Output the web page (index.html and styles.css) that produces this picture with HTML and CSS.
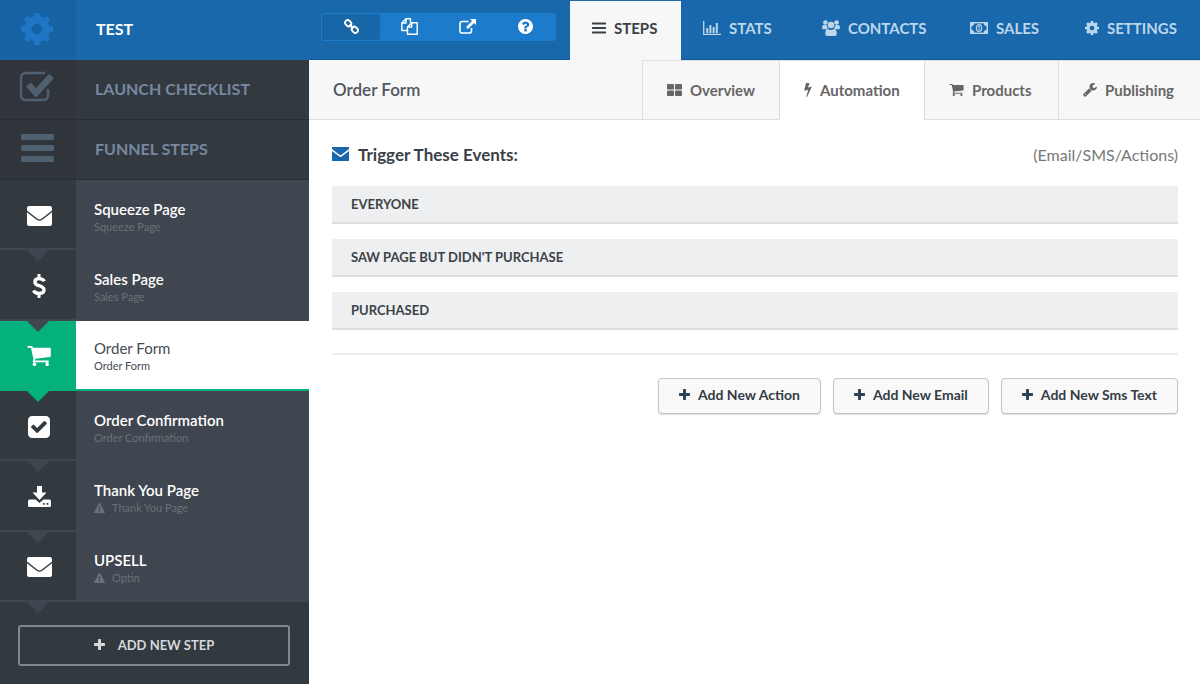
FILE: index.html
```html
<!DOCTYPE html>
<html lang="en">
<head>
<meta charset="utf-8">
<title>Test funnel - Order Form</title>
<meta name="viewport" content="width=device-width, initial-scale=1">
<link rel="stylesheet" href="styles.css">
</head>
<body>
<svg class="sprite" aria-hidden="true">
  <symbol id="gear-lg" viewBox="0 0 32 32"><g fill="none" stroke="currentColor"><circle cx="16" cy="16" r="9" stroke-width="7.4"/></g><g fill="currentColor"><path d="M12.600 6 13.200.6Q13.300 0 14 0h4q.7 0 .8.6L19.400 6zM12.600 26l.6 5.400q.1.6.8.6h4q.7 0 .8-.6l.6-5.400z"/><path transform="rotate(45 16 16)" d="M12.600 6 13.200.6Q13.300 0 14 0h4q.7 0 .8.6L19.400 6zM12.600 26l.6 5.400q.1.6.8.6h4q.7 0 .8-.6l.6-5.400z"/><path transform="rotate(90 16 16)" d="M12.600 6 13.200.6Q13.300 0 14 0h4q.7 0 .8.6L19.400 6zM12.600 26l.6 5.400q.1.6.8.6h4q.7 0 .8-.6l.6-5.400z"/><path transform="rotate(135 16 16)" d="M12.600 6 13.200.6Q13.300 0 14 0h4q.7 0 .8.6L19.400 6zM12.600 26l.6 5.400q.1.6.8.6h4q.7 0 .8-.6l.6-5.400z"/></g></symbol>
  <symbol id="checklist" viewBox="0 0 36 32"><path d="M26 2H7Q2 2 2 7v17q0 5 5 5h17q5 0 5-5v-6" fill="none" stroke="currentColor" stroke-width="2.400"/><path d="m9.500 13.500 7.500 8.500L32.500 5" fill="none" stroke="currentColor" stroke-width="6.400"/></symbol>
  <symbol id="bars-lg" viewBox="0 0 33 28"><g fill="currentColor"><rect width="33" height="6" rx="1.500"/><rect y="11" width="33" height="6" rx="1.500"/><rect y="22" width="33" height="6" rx="1.500"/></g></symbol>
  <symbol id="bars" viewBox="0 0 14 12"><path d="M.5 1.500h13M.5 6h13M.5 10.500h13" stroke="currentColor" stroke-width="1.800" stroke-linecap="round"/></symbol>
  <symbol id="envelope" viewBox="0 0 25 20"><path fill="currentColor" d="M2 0h21q2 0 2 2v2.600l-10.500 8.200q-2 1.500-4 0L0 4.600V2Q0 0 2 0zM0 6.200l9.600 7.500q2.900 2.200 5.800 0L25 6.200V18q0 2-2 2H2q-2 0-2-2z"/></symbol>
  <symbol id="envelope-sq" viewBox="0 0 17 14"><path fill="currentColor" d="M0 0h17v2L9.500 7.700q-1 .7-2 0L0 2zM0 4l7 5.200q1.500 1 3 0L17 4v10H0z"/></symbol>
  <symbol id="dollar" viewBox="0 0 14 24"><path d="M12.300 7.200Q11 4.600 7.200 4.600 2.900 4.600 2.900 7.900q0 2.500 4.100 3.700 5 1.400 5 4.500 0 3.400-4.800 3.400-4.200 0-5.700-3" fill="none" stroke="currentColor" stroke-width="3.400"/><path d="M7 0v5M7 19v5" stroke="currentColor" stroke-width="3"/></symbol>
  <symbol id="cart" viewBox="64 256 1664 1408"><path fill="currentColor" d="M704 1536q0 52-38 90t-90 38-90-38-38-90 38-90 90-38 90 38 38 90zm896 0q0 52-38 90t-90 38-90-38-38-90 38-90 90-38 90 38 38 90zm128-1088v512q0 24-16.500 42.500t-40.500 21.500l-1044 122q13 60 13 70 0 16-24 64h920q26 0 45 19t19 45-19 45-45 19h-1024q-26 0-45-19t-19-45q0-11 8-31.500t16-36 21.500-40 15.500-29.500l-177-823h-204q-26 0-45-19t-19-45 19-45 45-19h256q16 0 28.500 6.500t19.500 15.500 13 24.500 8 26 5.500 29.500 4.500 26h1201q26 0 45 19t19 45z"/></symbol>
  <symbol id="check-square" viewBox="128 128 1536 1536"><path fill="currentColor" d="M813 1299l614-614q19-19 19-45t-19-45l-102-102q-19-19-45-19t-45 19l-467 467-211-211q-19-19-45-19t-45 19l-102 102q-19 19-19 45t19 45l358 358q19 19 45 19t45-19zm851-883v960q0 119-84.500 203.500t-203.500 84.500h-960q-119 0-203.500-84.500t-84.500-203.500v-960q0-119 84.500-203.500t203.500-84.500h960q119 0 203.500 84.500t84.500 203.500z"/></symbol>
  <symbol id="download" viewBox="0 0 23 21"><path fill="currentColor" d="M9 0h5v6.500h4.500L11.500 14l-7-7.500H9z"/><path fill="currentColor" fill-rule="evenodd" d="M1.500 13.500h6l4 3.500 4-3.500h6q1.500 0 1.500 1.500v4.500q0 1.500-1.500 1.500h-20Q0 21 0 19.500V15q0-1.500 1.500-1.500zM15 17v1.700h1.700V17zm3.600 0v1.700h1.700V17z"/></symbol>
  <symbol id="plus" viewBox="192 128 1408 1408"><path fill="currentColor" d="M1600 736v192q0 40-28 68t-68 28h-416v416q0 40-28 68t-68 28h-192q-40 0-68-28t-28-68v-416h-416q-40 0-68-28t-28-68v-192q0-40 28-68t68-28h416v-416q0-40 28-68t68-28h192q40 0 68 28t28 68v416h416q40 0 68 28t28 68z"/></symbol>
  <symbol id="warning" viewBox="0 0 12 11"><path fill="currentColor" fill-rule="evenodd" d="M6 0q.5 0 .8.500l5 9.300Q12.300 11 11 11H1Q-.3 11 .2 9.800l5-9.300Q5.500 0 6 0zM5.100 3.800l.3 3.400h1.200l.3-3.400zm.2 4.200v1.400h1.400V8z"/></symbol>
  <symbol id="link" viewBox="0 0 16 16"><g transform="rotate(45 8 8)" fill="none" stroke="currentColor" stroke-width="2"><rect x="-.5" y="5.200" width="7" height="5.600" rx="2.800"/><rect x="9.500" y="5.200" width="7" height="5.600" rx="2.800"/><path d="M5 8h6"/></g></symbol>
  <symbol id="copy" viewBox="0 0 17 17"><g fill="none" stroke="currentColor" stroke-width="1.400" stroke-linejoin="round"><path d="M6.500 12.500H.8V5L5 .8h4.500v4M5 .8V5H.8"/><path d="M10.700 4.800h5.500v11.400H6.500V9zV9H6.500"/></g></symbol>
  <symbol id="external" viewBox="0 0 17 15"><path d="M9.500 2.500H3.200Q1 2.500 1 4.700v7Q1 14 3.200 14h7.100q2.200 0 2.200-2.300V9" fill="none" stroke="currentColor" stroke-width="1.600"/><path fill="currentColor" d="M11 0h6v6l-2-2-6 6-1.900-1.900 6-6z"/></symbol>
  <symbol id="question" viewBox="128 128 1536 1536"><path fill="currentColor" d="M1024 1376v-192q0-14-9-23t-23-9h-192q-14 0-23 9t-9 23v192q0 14 9 23t23 9h192q14 0 23-9t9-23zm256-672q0-88-55.500-163t-138.500-116-170-41q-243 0-371 213-15 24 8 42l132 100q7 6 19 6 16 0 25-12 53-68 86-92 34-24 86-24 48 0 85.500 26t37.500 59q0 38-20 61t-68 45q-63 28-115.500 86.500t-52.500 125.500v36q0 14 9 23t23 9h192q14 0 23-9t9-23q0-19 21.500-49.500t54.500-49.500q32-18 49-28.500t46-35 44.500-48 28-60.500 12.500-81zm384 192q0 209-103 385.500t-279.500 279.500-385.500 103-385.500-103-279.500-279.500-103-385.500 103-385.500 279.500-279.500 385.500-103 385.500 103 279.500 279.500 103 385.500z"/></symbol>
  <symbol id="chart" viewBox="0 0 18 14"><path d="M.7 0v13.300H18" fill="none" stroke="currentColor" stroke-width="1.300"/><path d="M4.200 7v5M7.400 4v8M10.600 6v6M13.800 2v10" stroke="currentColor" stroke-width="2"/></symbol>
  <symbol id="users" viewBox="0 0 18 16"><g fill="currentColor"><circle cx="3.400" cy="2.500" r="2.300"/><circle cx="14.600" cy="2.500" r="2.300"/><circle cx="9" cy="5" r="3.300"/><path d="M1.500 5h2q.9.600 1.600.6-.1 1.600.8 2.800-1.200 0-2 .9H1.500Q0 9.300 0 8q0-2.800 1.500-3zM16.500 5h-2q-.9.600-1.600.6.100 1.600-.8 2.800 1.200 0 2 .9h2.400Q18 9.300 18 8q0-2.800-1.500-3z"/><path d="M5.800 8.700Q7.300 9.900 9 9.900t3.200-1.200q2.600.3 2.600 5.100 0 2.200-2 2.200H5.200q-2 0-2-2.200 0-4.800 2.600-5.100z"/></g></symbol>
  <symbol id="money" viewBox="0 0 18 12"><rect x=".7" y=".7" width="16.600" height="10.600" fill="none" stroke="currentColor" stroke-width="1.400"/><path fill="currentColor" d="M1 1h3.500Q4.300 4 1 4.300zM17 1h-3.500q.2 3 3.500 3.300zM1 11h3.500Q4.300 8 1 7.700zM17 11h-3.500q.2-3 3.500-3.300z"/><ellipse cx="9" cy="6" rx="2.600" ry="3.400" fill="none" stroke="currentColor" stroke-width="1.200"/><path d="M8 4.900 9.200 4v4" fill="none" stroke="currentColor"/></symbol>
  <symbol id="cog" viewBox="128 128 1536 1536"><path fill="currentColor" d="M1152 896q0-106-75-181t-181-75-181 75-75 181 75 181 181 75 181-75 75-181zm512-109v222q0 12-8 23t-20 13l-185 28q-19 54-39 91 35 50 107 138 10 12 10 25t-9 23q-27 37-99 108t-94 71q-12 0-26-9l-138-108q-44 23-91 38-16 136-29 186-7 28-36 28h-222q-14 0-24.500-8.500t-11.500-21.500l-28-184q-49-16-90-37l-141 107q-10 9-25 9-14 0-25-11-126-114-165-168-7-10-7-23 0-12 8-23 15-21 51-66.500t54-70.500q-27-50-41-99l-183-27q-13-2-21-12.500t-8-23.500v-222q0-12 8-23t19-13l186-28q14-46 39-92-40-57-107-138-10-12-10-24 0-10 9-23 26-36 98.500-107.500t94.500-71.500q13 0 26 10l138 107q44-23 91-38 16-136 29-186 7-28 36-28h222q14 0 24.500 8.500t11.500 21.500l28 184q49 16 90 37l142-107q9-9 24-9 13 0 25 10 129 119 165 170 7 8 7 22 0 12-8 23-15 21-51 66.500t-54 70.500q26 50 41 98l183 28q13 2 21 12.500t8 23.500z"/></symbol>
  <symbol id="grid" viewBox="0 0 15 12"><g fill="currentColor"><rect width="7" height="5.500" rx="1"/><rect x="8" width="7" height="5.500" rx="1"/><rect y="6.500" width="7" height="5.500" rx="1"/><rect x="8" y="6.500" width="7" height="5.500" rx="1"/></g></symbol>
  <symbol id="bolt" viewBox="448 0 896 1792"><path fill="currentColor" d="M1333 566q18 20 7 44l-540 1157q-13 25-42 25-4 0-14-2-17-5-25.500-19t-4.500-30l197-808-406 101q-4 1-12 1-18 0-31-11-18-15-13-39l201-825q4-14 16-23t28-9h328q19 0 32 12.500t13 29.500q0 8-5 18l-171 463 396-98q8-2 12-2 19 0 34 15z"/></symbol>
  <symbol id="wrench" viewBox="64 128 1664 1664"><path fill="currentColor" d="M448 1472q0-26-19-45t-45-19-45 19-19 45 19 45 45 19 45-19 19-45zm644-420l-682 682q-37 37-90 37-52 0-91-37l-106-108q-38-36-38-90 0-53 38-91l681-681q39 98 114.500 173.500t173.500 114.500zm634-435q0 39-23 106-47 134-164.500 217.500t-258.500 83.500q-185 0-316.500-131.500t-131.500-316.500 131.500-316.500 316.500-131.500q58 0 121.500 16.500t107.500 46.500q16 11 16 28t-16 28l-293 169v224l193 107q5-3 79-48.500t135.500-81 70.500-35.500q15 0 23.500 10t8.500 25z"/></symbol>
</svg>

<div class="app">
  <aside class="sidebar">
    <a class="side-row brand" href="#"><span class="side-icon"><svg width="32" height="32"><use href="#gear-lg"/></svg></span><span class="side-label">TEST</span></a>
    <a class="side-row" href="#"><span class="side-icon raised"><svg width="36" height="32"><use href="#checklist"/></svg></span><span class="side-label">LAUNCH CHECKLIST</span></a>
    <a class="side-row" href="#"><span class="side-icon"><svg width="33" height="28"><use href="#bars-lg"/></svg></span><span class="side-label">FUNNEL STEPS</span></a>
    <nav class="steps" aria-label="Funnel steps">
      <a class="step" href="#"><span class="step-icon"><svg width="25" height="20"><use href="#envelope"/></svg></span><span class="step-text"><span class="step-name">Squeeze Page</span><span class="step-type">Squeeze Page</span></span></a>
      <a class="step" href="#"><span class="step-icon"><svg width="14" height="24"><use href="#dollar"/></svg></span><span class="step-text"><span class="step-name">Sales Page</span><span class="step-type">Sales Page</span></span></a>
      <a class="step active" href="#" aria-current="page"><span class="step-icon"><svg width="24" height="20"><use href="#cart"/></svg></span><span class="step-text"><span class="step-name">Order Form</span><span class="step-type">Order Form</span></span></a>
      <a class="step" href="#"><span class="step-icon"><svg width="22" height="22"><use href="#check-square"/></svg></span><span class="step-text"><span class="step-name">Order Confirmation</span><span class="step-type">Order Confirmation</span></span></a>
      <a class="step" href="#"><span class="step-icon"><svg width="23" height="21"><use href="#download"/></svg></span><span class="step-text"><span class="step-name">Thank You Page</span><span class="step-type"><svg width="11" height="10"><use href="#warning"/></svg>Thank You Page</span></span></a>
      <a class="step" href="#"><span class="step-icon"><svg width="25" height="20"><use href="#envelope"/></svg></span><span class="step-text"><span class="step-name">UPSELL</span><span class="step-type"><svg width="11" height="10"><use href="#warning"/></svg>Optin</span></span></a>
    </nav>
    <button class="add-step" type="button"><svg width="11" height="11"><use href="#plus"/></svg>ADD NEW STEP</button>
  </aside>

  <main class="main">
    <header class="topbar">
      <div class="tools">
        <button class="tool selected" type="button" aria-label="Link"><svg width="15" height="15"><use href="#link"/></svg></button>
        <button class="tool" type="button" aria-label="Copy"><svg width="17" height="17"><use href="#copy"/></svg></button>
        <button class="tool" type="button" aria-label="Open"><svg width="17" height="15"><use href="#external"/></svg></button>
        <button class="tool" type="button" aria-label="Help"><svg width="15" height="15"><use href="#question"/></svg></button>
      </div>
      <nav class="tabs" aria-label="Funnel">
        <a class="tab current" href="#"><svg width="14" height="12"><use href="#bars"/></svg>STEPS</a>
        <a class="tab" href="#"><svg width="18" height="14"><use href="#chart"/></svg>STATS</a>
        <a class="tab" href="#"><svg width="18" height="16"><use href="#users"/></svg>CONTACTS</a>
        <a class="tab" href="#"><svg width="18" height="12"><use href="#money"/></svg>SALES</a>
        <a class="tab" href="#"><svg width="14" height="14"><use href="#cog"/></svg>SETTINGS</a>
      </nav>
    </header>
    <div class="subbar">
      <h1 class="page-title">Order Form</h1>
      <nav class="subtabs" aria-label="Step">
        <a class="subtab" href="#"><svg width="15" height="12"><use href="#grid"/></svg>Overview</a>
        <a class="subtab current" href="#"><svg width="8" height="15"><use href="#bolt"/></svg>Automation</a>
        <a class="subtab" href="#"><svg width="15" height="12"><use href="#cart"/></svg>Products</a>
        <a class="subtab" href="#"><svg width="14" height="14"><use href="#wrench"/></svg>Publishing</a>
      </nav>
    </div>
    <section class="content">
      <div class="heading">
        <h2 class="heading-title"><svg width="17" height="14"><use href="#envelope-sq"/></svg>Trigger These Events:</h2>
        <span class="heading-note">(Email/SMS/Actions)</span>
      </div>
      <div class="events">
        <h3 class="event">EVERYONE</h3>
        <h3 class="event">SAW PAGE BUT DIDN'T PURCHASE</h3>
        <h3 class="event">PURCHASED</h3>
      </div>
      <div class="actions">
        <button class="action" type="button"><svg width="11" height="11"><use href="#plus"/></svg>Add New Action</button>
        <button class="action" type="button"><svg width="11" height="11"><use href="#plus"/></svg>Add New Email</button>
        <button class="action" type="button"><svg width="11" height="11"><use href="#plus"/></svg>Add New Sms Text</button>
      </div>
    </section>
  </main>
</div>
</body>
</html>
```
FILE: styles.css
```css
* { box-sizing: border-box; }

body {
  margin: 0;
  background: #fff;
  color: #3a4047;
  font-family: Lato, "Open Sans", sans-serif;
  font-size: 15px;
}

a { color: inherit; text-decoration: none; }
button { font: inherit; cursor: pointer; }
svg { display: block; flex: none; }
.sprite { position: absolute; width: 0; height: 0; }

.app { display: flex; min-height: 100vh; }

/* Sidebar */
.sidebar {
  flex: none;
  width: 309px;
  background: #32393f;
}

.side-row {
  display: flex;
  height: 60px;
  border-bottom: 1px solid #292e33;
  color: #7788a0;
  font-size: 16px;
  font-weight: 700;
}
.side-icon {
  display: flex;
  align-items: center;
  justify-content: center;
  width: 76px;
  padding: 0 2px 3px 0;
  background: #2f353b;
  color: #4f6070;
}
.side-icon.raised { padding: 0 2px 6px 0; }
.side-label { align-self: center; padding: 0 0 2px 19px; }

.brand { border-bottom: 0; background: #1868ab; color: #fff; }
.brand .side-icon { background: #1762a2; color: #1e77c5; }
.brand .side-label { padding: 0 0 4px 20px; }

.steps {
  display: grid;
  grid-template-rows: repeat(6, 1fr);
  min-height: 422px;
}
.step { display: flex; background: #3f464f; }
.step-icon {
  position: relative;
  display: flex;
  align-items: center;
  justify-content: center;
  width: 76px;
  padding: 3px 0 0 2px;
  border-bottom: 2px solid #3f464f;
  background: #32393f;
  color: #fff;
}
.step-icon::after {
  content: "";
  position: absolute;
  z-index: 1;
  top: 100%;
  left: 25px;
  border: solid transparent;
  border-width: 13px 13px 0;
  border-top-color: #3f464f;
}
.step-text {
  display: flex;
  flex: 1;
  flex-direction: column;
  justify-content: center;
  gap: 1px;
  padding: 2px 18px 0;
}
.step-name { color: #fff; font-size: 15px; line-height: 20px; font-weight: 600; }
.step-type {
  display: flex;
  align-items: center;
  gap: 7px;
  color: #6a7178;
  font-size: 11px;
  line-height: 14px;
}

.step.active { background: #fff; }
.active .step-icon { border-color: #04b07b; background: #04b07b; }
.active .step-icon::after { border-top-color: #04b07b; }
.active .step-text { border-bottom: 2px solid #04b07b; }
.active .step-name { color: #444b53; font-weight: 400; }
.active .step-type { color: #444b53; }

.add-step {
  display: flex;
  align-items: center;
  justify-content: center;
  gap: 13px;
  width: 272px;
  height: 41px;
  margin: 23px 18px 18px;
  padding: 0 0 2px;
  border: 2px solid #83878a;
  border-radius: 3px;
  background: transparent;
  color: #d5d8da;
  font-size: 13px;
  font-weight: 700;
}

/* Top bar */
.main { flex: 1; min-width: 0; }

.topbar {
  display: flex;
  justify-content: space-between;
  height: 60px;
  padding-left: 12px;
  border-bottom: 1px solid #0f5a9c;
  background: #1868ab;
}
.tools {
  display: grid;
  grid-template-columns: repeat(4, 1fr);
  width: 235px;
  height: 28px;
  margin-top: 13px;
  padding: 1px;
  border-radius: 3px;
  background: #1c7ccb;
}
.tool {
  display: flex;
  align-items: center;
  justify-content: center;
  padding: 0 0 2px;
  border: 0;
  background: transparent;
  color: #fff;
}
.tool.selected { border-radius: 2px; background: #1666a8; }

.tabs {
  display: grid;
  grid-template-columns: 111px 119px 148px 115px 137px;
  height: 60px;
  padding-top: 1px;
}
.tab {
  display: flex;
  align-items: center;
  gap: 8px;
  padding: 0 0 5px 22px;
  color: #bcd6ec;
  font-size: 15px;
  font-weight: 700;
}
.tab.current { background: #f7f7f7; color: #3a4047; }

/* Step bar */
.subbar {
  display: flex;
  justify-content: space-between;
  height: 60px;
  background: #f7f7f7;
}
.page-title {
  display: flex;
  flex: 1;
  align-items: center;
  margin: 0;
  padding-left: 24px;
  border-bottom: 1px solid #dedede;
  color: #50565d;
  font-size: 17px;
  font-weight: 600;
}
.subtabs {
  display: grid;
  grid-template-columns: 137px 145px 134px 142px;
}
.subtab {
  display: flex;
  align-items: center;
  gap: 8px;
  padding: 0 0 1px 24px;
  border: solid #dedede;
  border-width: 1px 0 1px 1px;
  color: #666;
  font-size: 15px;
  font-weight: 700;
}
.subtab.current { border-bottom-color: #fff; background: #fff; }

/* Content */
.content { padding: 21px 22px 24px 23px; }

.heading {
  display: flex;
  align-items: center;
  justify-content: space-between;
  height: 26px;
  margin-bottom: 19px;
}
.heading-title {
  display: flex;
  align-items: center;
  gap: 9px;
  margin: 0;
  color: #3a4047;
  font-size: 17px;
  font-weight: 700;
}
.heading-title svg { color: #1868ab; }
.heading-note { color: #777; font-size: 16px; }

.events {
  display: grid;
  gap: 15px;
  padding-bottom: 23px;
  border-bottom: 2px solid #eee;
}
.event {
  margin: 0;
  padding: 9px 19px;
  border-bottom: 2px solid #dcdee0;
  background: #edeff1;
  color: #3d4146;
  font-size: 13px;
  line-height: 18px;
  font-weight: 700;
}

.actions {
  display: flex;
  justify-content: flex-end;
  gap: 12px;
  margin-top: 23px;
}
.action {
  display: flex;
  align-items: center;
  gap: 8px;
  height: 36px;
  padding: 0 20px 3px;
  border: 1px solid #c4c4c4;
  border-radius: 4px;
  background: #f9f9f9;
  box-shadow: 0 1px 1px #e0e0e0;
  color: #343c45;
  font-size: 14px;
  font-weight: 700;
}
.action svg { color: #2c4258; }
```
